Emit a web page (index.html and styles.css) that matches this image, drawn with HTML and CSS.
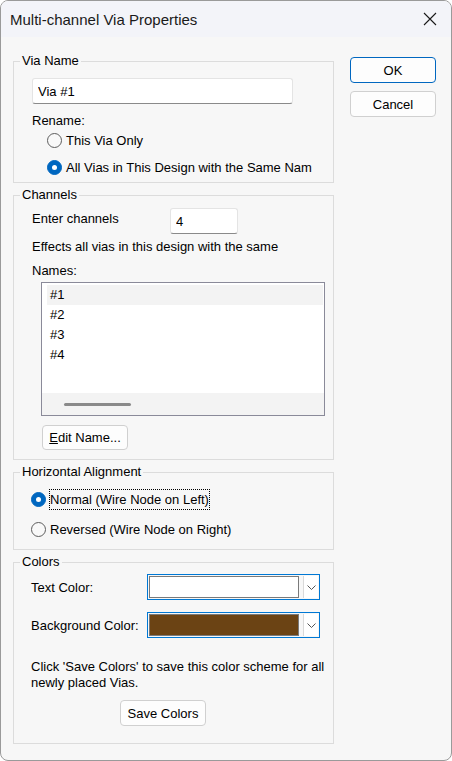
FILE: index.html
```html
<!DOCTYPE html>
<html lang="en">

<head>
    <meta charset="UTF-8">
    <meta name="viewport" content="width=device-width, initial-scale=1.0">
    <title>Multi-channel Via Properties</title>
    <link rel="stylesheet" href="styles.css">
</head>

<body>
    <div class="dialog">
        <div class="titlebar">
            <span class="title">Multi-channel Via Properties</span>
            <span class="close-btn">
                <svg width="14" height="14" viewBox="0 0 14 14">
                    <path d="M1 1 L13 13 M13 1 L1 13" stroke="#1a1a1a" stroke-width="1.1" fill="none" />
                </svg>
            </span>
        </div>

        <div class="content">
            <div class="groups">
                <fieldset class="group group-name">
                    <legend>Via Name</legend>
                    <input type="text" class="textbox name-input" value="Via #1">
                    <div class="line rename-label">Rename:</div>
                    <label class="radio-row rename-first">
                        <span class="radio"></span>This Via Only
                    </label>
                    <label class="radio-row rename-second">
                        <span class="radio checked"></span>All Vias in This Design with the Same Nam
                    </label>
                </fieldset>

                <fieldset class="group group-channels">
                    <legend>Channels</legend>
                    <div class="channel-row">
                        <span class="channel-label">Enter channels</span>
                        <input type="text" class="textbox channel-input" value="4">
                    </div>
                    <div class="line effects-note">Effects all vias in this design with the same</div>
                    <div class="line names-label">Names:</div>
                    <div class="listbox">
                        <ul class="list-items">
                            <li class="selected">#1</li>
                            <li>#2</li>
                            <li>#3</li>
                            <li>#4</li>
                        </ul>
                        <div class="hscroll"><span class="hscroll-thumb"></span></div>
                    </div>
                    <button class="btn edit-btn"><u>E</u>dit Name...</button>
                </fieldset>

                <fieldset class="group group-align">
                    <legend>Horizontal Alignment</legend>
                    <label class="radio-row align-first">
                        <span class="radio checked"></span><span class="focus-text">Normal (Wire Node on Left)</span>
                    </label>
                    <label class="radio-row align-second">
                        <span class="radio"></span>Reversed (Wire Node on Right)
                    </label>
                </fieldset>

                <fieldset class="group group-colors">
                    <legend>Colors</legend>
                    <div class="color-row first-color">
                        <span class="color-label">Text Color:</span>
                        <div class="color-combo">
                            <span class="swatch" style="background: #ffffff"></span>
                            <span class="drop-btn">
                                <svg width="9" height="5" viewBox="0 0 9 5">
                                    <path d="M0.5 0.5 L4.5 4.5 L8.5 0.5" stroke="#555" stroke-width="1" fill="none" />
                                </svg>
                            </span>
                        </div>
                    </div>
                    <div class="color-row second-color">
                        <span class="color-label">Background Color:</span>
                        <div class="color-combo">
                            <span class="swatch" style="background: #6b4314"></span>
                            <span class="drop-btn">
                                <svg width="9" height="5" viewBox="0 0 9 5">
                                    <path d="M0.5 0.5 L4.5 4.5 L8.5 0.5" stroke="#555" stroke-width="1" fill="none" />
                                </svg>
                            </span>
                        </div>
                    </div>
                    <p class="save-note">Click 'Save Colors' to save this color scheme for all newly placed Vias.</p>
                    <button class="btn save-btn">Save Colors</button>
                </fieldset>
            </div>

            <div class="actions">
                <button class="btn btn-default">OK</button>
                <button class="btn">Cancel</button>
            </div>
        </div>
    </div>
</body>

</html>
```

FILE: styles.css
```css
* {
    margin: 0;
    padding: 0;
    box-sizing: border-box;
}

body {
    font-family: "Liberation Sans", Arial, sans-serif;
    font-size: 13px;
    color: #000;
    background-color: #ffffff;
}

.dialog {
    width: 452px;
    height: 761px;
    border: 1px solid #9a9a9a;
    border-radius: 8px;
    overflow: hidden;
    background-color: #f7f7f7;
}

.titlebar {
    height: 36px;
    background-color: #f3f4f9;
    display: flex;
    align-items: center;
    justify-content: space-between;
    padding: 0 14px 0 9px;
}

.title {
    font-size: 15px;
    color: #1a1a1a;
}

.close-btn {
    display: flex;
    align-items: center;
}

.content {
    display: flex;
    padding: 16px 0 0 12px;
}

.groups {
    width: 321px;
    display: flex;
    flex-direction: column;
}

.actions {
    display: flex;
    flex-direction: column;
    gap: 8px;
    padding-top: 4px;
    margin-left: 16px;
}

/* group boxes */
.group {
    border: 1px solid #dcdcdc;
    padding: 0 0 0 18px;
}

.group legend {
    margin-left: -12px;
    padding: 0 2px;
    line-height: 16px;
}

.group-name {
    padding-top: 9px;
    padding-bottom: 5px;
}

.group-channels {
    margin-top: 4px;
    padding-bottom: 9px;
}

.group-align {
    margin-top: 4px;
    padding-left: 17px;
    padding-bottom: 10px;
}

.group-colors {
    margin-top: 4px;
    padding-left: 17px;
    padding-bottom: 17px;
}

.group-align legend,
.group-colors legend {
    margin-left: -11px;
}

.line {
    line-height: 16px;
    height: 16px;
    white-space: nowrap;
}

/* text fields */
.textbox {
    font-family: inherit;
    font-size: 13px;
    height: 26px;
    border: 1px solid #e4e4e4;
    border-bottom-color: #8a8a8a;
    border-radius: 3px;
    background-color: #fff;
    padding: 0 5px;
    outline: none;
}

.name-input {
    width: 261px;
}

.rename-label {
    margin-top: 9px;
}

/* radio buttons */
.radio-row {
    display: flex;
    align-items: center;
    height: 20px;
    white-space: nowrap;
}

.radio {
    width: 15px;
    height: 15px;
    border-radius: 50%;
    border: 1px solid #5d5d5d;
    background-color: #f9f9f9;
    margin-right: 4px;
    flex-shrink: 0;
    position: relative;
}

.radio.checked {
    border-color: #0067c0;
    background-color: #0067c0;
}

.radio.checked::after {
    content: "";
    position: absolute;
    left: 4px;
    top: 4px;
    width: 5px;
    height: 5px;
    border-radius: 50%;
    background-color: #fff;
}

.rename-first {
    margin-top: 1px;
    padding-left: 15px;
}

.rename-second {
    margin-top: 7px;
    padding-left: 15px;
}

.align-first {
    margin-top: 9px;
}

.align-second {
    margin-top: 10px;
}

.focus-text {
    outline: 1px dotted #000;
    outline-offset: 0;
    padding: 2px 0;
}

/* channels */
.channel-row {
    display: flex;
    margin-top: 5px;
}

.channel-label {
    width: 138px;
    padding-top: 3px;
    line-height: 16px;
}

.channel-input {
    width: 68px;
}

.effects-note {
    margin-top: 5px;
}

.names-label {
    margin-top: 8px;
}

.listbox {
    margin: 3px 0 0 9px;
    width: 284px;
    height: 134px;
    border: 1px solid #8a8a99;
    background-color: #fff;
    display: flex;
    flex-direction: column;
}

.list-items {
    list-style: none;
    flex: 1;
    padding: 2px 1px 0 5px;
}

.list-items li {
    height: 20px;
    line-height: 20px;
    padding-left: 3px;
}

.list-items li.selected {
    background-color: #f3f3f3;
}

.hscroll {
    height: 22px;
    background-color: #f3f3f3;
    display: flex;
    align-items: center;
    padding-left: 22px;
}

.hscroll-thumb {
    width: 67px;
    height: 3px;
    border-radius: 2px;
    background-color: #8a8a8a;
}

/* push buttons */
.btn {
    font-family: inherit;
    font-size: 13px;
    width: 86px;
    height: 26px;
    background-color: #fdfdfd;
    border: 1px solid #d0d0d0;
    border-radius: 4px;
    color: #000;
}

.btn-default {
    border-color: #0067c0;
}

.edit-btn {
    margin: 9px 0 0 10px;
    height: 25px;
}

.edit-btn u {
    text-decoration: underline;
}

/* colour pickers */
.color-row {
    display: flex;
    align-items: center;
}

.first-color {
    margin-top: 4px;
}

.second-color {
    margin-top: 12px;
}

.color-label {
    width: 116px;
}

.color-combo {
    width: 173px;
    height: 26px;
    border: 1px solid #0078d4;
    display: flex;
    padding: 1px;
    gap: 4px;
}

.swatch {
    width: 150px;
    border: 1px solid #7a7a7a;
}

.drop-btn {
    flex: 1;
    background-color: #fff;
    border-left: 1px solid #d9d9d9;
    display: flex;
    align-items: center;
    justify-content: center;
}

.save-note {
    margin-top: 21px;
    line-height: 16px;
    padding-right: 8px;
}

.save-btn {
    margin: 9px 0 0 89px;
}
```
